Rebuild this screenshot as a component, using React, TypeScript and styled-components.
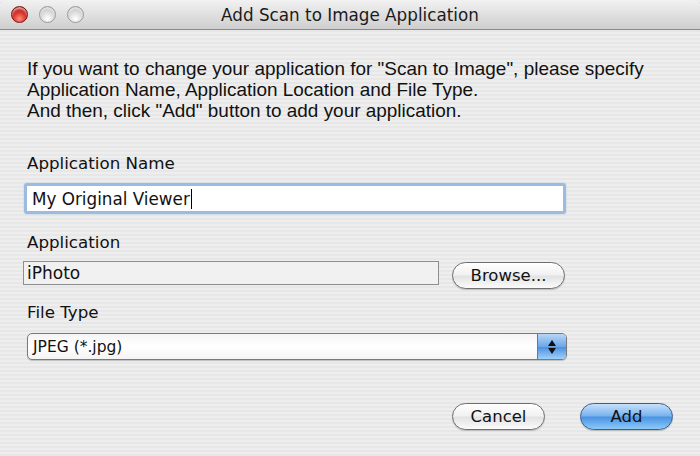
import React from 'react';
import styled, { createGlobalStyle } from 'styled-components';

const GlobalStyle = createGlobalStyle`
  html, body {
    margin: 0;
    padding: 0;
    width: 700px;
    height: 456px;
    overflow: hidden;
  }
`;

const Window = styled.div`
  width: 700px;
  height: 456px;
  display: flex;
  flex-direction: column;
  font-family: 'DejaVu Sans', sans-serif;
  color: #111;
  background-color: #ececec;
  background-image: repeating-linear-gradient(
    to bottom,
    #eeeeee 0px,
    #eeeeee 2px,
    #e7e7e7 2px,
    #e7e7e7 4px
  );
`;

const TitleBar = styled.div`
  height: 29px;
  flex-shrink: 0;
  display: flex;
  align-items: center;
  position: relative;
  border-bottom: 1px solid #8a8a8a;
  border-top-right-radius: 8px;
  border-top-left-radius: 8px;
  background: linear-gradient(to bottom, #f2f2f2 0%, #dedede 55%, #cfcfcf 100%);
`;

const Lights = styled.div`
  display: flex;
  gap: 11px;
  padding-left: 11px;
`;

const Light = styled.span<{ $red?: boolean }>`
  width: 17px;
  height: 17px;
  border-radius: 50%;
  box-sizing: border-box;
  border: 1px solid ${(p) => (p.$red ? '#7a1414' : '#9a9a9a')};
  background: ${(p) =>
    p.$red
      ? 'radial-gradient(circle at 50% 78%, #ff8d80 0%, #d9352b 45%, #9a1410 100%)'
      : 'radial-gradient(circle at 50% 78%, #ffffff 0%, #dadada 50%, #a9a9a9 100%)'};
  box-shadow: inset 0 2px 2px rgba(255, 255, 255, 0.6);
`;

const Title = styled.div`
  position: absolute;
  left: 0;
  right: 0;
  text-align: center;
  font-size: 16.8px;
  color: #1a1a1a;
  pointer-events: none;
`;

const Body = styled.div`
  flex: 1;
  padding: 28px 0 0 27px;
  display: flex;
  flex-direction: column;
`;

const Intro = styled.p`
  margin: 0;
  font-family: 'Liberation Sans', sans-serif;
  font-size: 18.95px;
  line-height: 21px;
  white-space: nowrap;
`;

const Label = styled.div<{ $top: number }>`
  margin-top: ${(p) => p.$top}px;
  font-size: 16.7px;
  line-height: 20px;
`;

const Row = styled.div`
  display: flex;
  align-items: flex-start;
  margin-top: 9px;
`;

const NameInput = styled.div`
  margin: 10px 0 0 -3px;
  width: 542px;
  height: 31px;
  box-sizing: border-box;
  border-radius: 3px;
  border: 3px solid #9dbbdd;
  box-shadow: 0 0 2px #b7cfe9;
  background: #fff;
  display: flex;
  align-items: center;
  padding-left: 5px;
  font-size: 16.8px;
`;

const Caret = styled.span`
  display: inline-block;
  width: 1px;
  height: 20px;
  background: #000;
  margin-left: 1px;
`;

const PathField = styled.div`
  margin-left: -4px;
  width: 416px;
  height: 24px;
  box-sizing: border-box;
  border: 1px solid #8e8e8e;
  background: #f1f1f1;
  display: flex;
  align-items: center;
  padding-left: 3px;
  font-size: 17px;
`;

const PillButton = styled.button<{ $width: number; $primary?: boolean }>`
  width: ${(p) => p.$width}px;
  height: 27px;
  border-radius: 14px;
  font-family: 'DejaVu Sans', sans-serif;
  font-size: 16.5px;
  color: #111;
  padding: 0;
  border: 1px solid ${(p) => (p.$primary ? '#3a5f93' : '#6e6e6e')};
  background: ${(p) =>
    p.$primary
      ? 'linear-gradient(to bottom, #c7e0fb 0%, #77b2ee 48%, #4a92e3 52%, #8ccaf8 100%)'
      : 'linear-gradient(to bottom, #ffffff 0%, #f1f1f1 48%, #e2e2e2 52%, #fbfbfb 100%)'};
  box-shadow: 0 1px 1px rgba(0, 0, 0, 0.2);
`;

const BrowseButton = styled(PillButton)`
  margin: 1px 0 0 13px;
`;

const Select = styled.div`
  margin-top: 11px;
  width: 540px;
  height: 27px;
  box-sizing: border-box;
  border: 1px solid #7a7a7a;
  border-radius: 5px;
  display: flex;
  overflow: hidden;
  background: linear-gradient(to bottom, #f4f4f4 0%, #ffffff 50%, #f4f4f4 100%);
  box-shadow: 0 1px 1px rgba(0, 0, 0, 0.2);
`;

const SelectText = styled.div`
  flex: 1;
  display: flex;
  align-items: center;
  padding-left: 5px;
  font-size: 15.5px;
`;

const Stepper = styled.div`
  width: 28px;
  display: flex;
  flex-direction: column;
  align-items: center;
  justify-content: center;
  gap: 2px;
  border-left: 1px solid #557bb0;
  background: linear-gradient(to bottom, #b8d6f6 0%, #6aa8ea 50%, #4b8fe0 52%, #9fd0fa 100%);
`;

const Footer = styled.div`
  display: flex;
  gap: 35px;
  margin: 43px 0 0 425px;
`;

export default function App() {
  return (
    <>
      <GlobalStyle />
      <Window>
        <TitleBar>
          <Lights>
            <Light $red />
            <Light />
            <Light />
          </Lights>
          <Title>Add Scan to Image Application</Title>
        </TitleBar>
        <Body>
          <Intro>
            If you want to change your application for "Scan to Image", please specify
            <br />
            Application Name, Application Location and File Type.
            <br />
            And then, click "Add" button to add your application.
          </Intro>

          <Label $top={32}>Application Name</Label>
          <NameInput>
            My Original Viewer
            <Caret />
          </NameInput>

          <Label $top={18}>Application</Label>
          <Row>
            <PathField>iPhoto</PathField>
            <BrowseButton $width={113}>Browse...</BrowseButton>
          </Row>

          <Label $top={13}>File Type</Label>
          <Select>
            <SelectText>JPEG (*.jpg)</SelectText>
            <Stepper>
              <svg width="8" height="6" viewBox="0 0 8 6">
                <path d="M4 0 L8 6 L0 6 Z" fill="#111" />
              </svg>
              <svg width="8" height="6" viewBox="0 0 8 6">
                <path d="M0 0 L8 0 L4 6 Z" fill="#111" />
              </svg>
            </Stepper>
          </Select>

          <Footer>
            <PillButton $width={93}>Cancel</PillButton>
            <PillButton $width={93} $primary>
              Add
            </PillButton>
          </Footer>
        </Body>
      </Window>
    </>
  );
}
